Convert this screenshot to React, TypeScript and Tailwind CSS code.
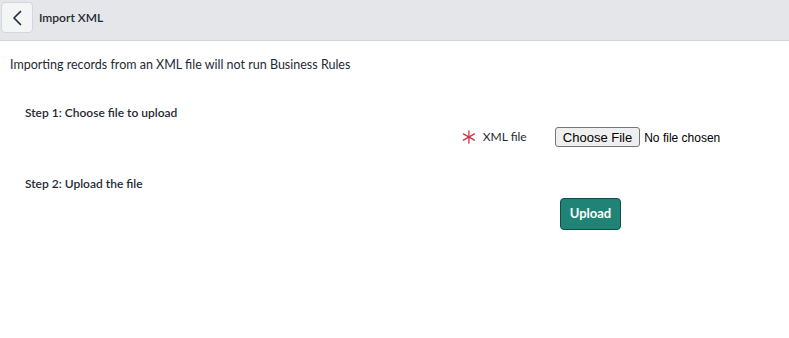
import React from 'react';

function BackIcon() {
  return (
    <svg width="14" height="16" viewBox="0 0 14 16" fill="none">
      <path d="M10.5 1.5L4 8l6.5 6.5" stroke="#1f2a44" strokeWidth="1.7" strokeLinecap="round" strokeLinejoin="round" />
    </svg>
  );
}

function Asterisk() {
  return (
    <svg width="14" height="14" viewBox="0 0 14 14" fill="none">
      <g stroke="#d0313f" strokeWidth="1.3" strokeLinecap="round">
        <path d="M7 0.7v12.6" />
        <path d="M1.4 3.8l11.2 6.4" />
        <path d="M12.6 3.8l-11.2 6.4" />
      </g>
    </svg>
  );
}

export default function App() {
  return (
    <div className="w-[789px] h-[338px] bg-white text-[#1f2a33]" style={{ fontFamily: 'Lato, "Noto Sans", sans-serif' }}>
      <header className="h-[41px] bg-[#e4e6e9] border-b border-[#d1d4d8] flex items-start pt-[2px] pl-[1px]">
        <button className="w-[32px] h-[31px] flex items-center justify-center rounded-[4px] border border-[#d3d6da] bg-[#f4f5f6]">
          <BackIcon />
        </button>
        <h1 className="ml-[6px] h-[31px] flex items-center text-[12px] font-semibold text-[#1f2a33]">Import XML</h1>
      </header>

      <main className="px-[10px]">
        <p className="mt-[16px] text-[12.5px] leading-[16px]">Importing records from an XML file will not run Business Rules</p>

        <section className="pl-[15px] mt-[32px]">
          <h2 className="text-[12px] font-semibold leading-[16px]">Step 1: Choose file to upload</h2>
          <div className="flex items-center mt-[5px] ml-[437px] h-[22px]">
            <Asterisk />
            <label className="ml-[7px] shrink-0 w-[72px] text-[12px]">XML file</label>
            <input
              type="file"
              className="min-w-0 text-[12px] text-black file:mr-[4px] file:h-[20px] file:px-[7px] file:text-[13px] file:rounded-[3px] file:border file:border-[#767676] file:bg-[#efefef] file:text-black"
              style={{ fontFamily: '"Liberation Sans", Arial, sans-serif' }}
            />
          </div>

          <h2 className="mt-[28px] text-[12px] font-semibold leading-[16px]">Step 2: Upload the file</h2>
          <div className="mt-[6px] ml-[535px]">
            <button className="w-[61px] h-[32px] rounded-[4px] bg-[#1f8476] border border-[#0f4f46] text-white text-[13px] font-bold">
              Upload
            </button>
          </div>
        </section>
      </main>
    </div>
  );
}
